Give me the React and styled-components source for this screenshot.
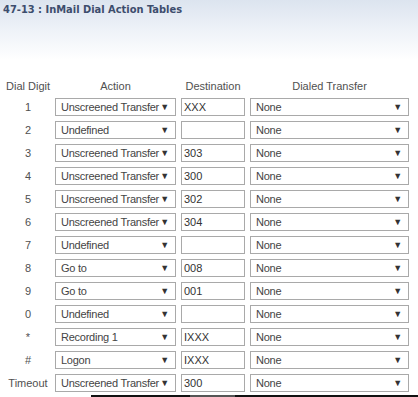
import React from 'react'
import styled, { createGlobalStyle } from 'styled-components';

const rows = [
    { digit: '1', action: 'Unscreened Transfer', dest: 'XXX' },
    { digit: '2', action: 'Undefined', dest: '' },
    { digit: '3', action: 'Unscreened Transfer', dest: '303' },
    { digit: '4', action: 'Unscreened Transfer', dest: '300' },
    { digit: '5', action: 'Unscreened Transfer', dest: '302' },
    { digit: '6', action: 'Unscreened Transfer', dest: '304' },
    { digit: '7', action: 'Undefined', dest: '' },
    { digit: '8', action: 'Go to', dest: '008' },
    { digit: '9', action: 'Go to', dest: '001' },
    { digit: '0', action: 'Undefined', dest: '' },
    { digit: '*', action: 'Recording 1', dest: 'IXXX' },
    { digit: '#', action: 'Logon', dest: 'IXXX' },
    { digit: 'Timeout', action: 'Unscreened Transfer', dest: '300' },
];

const Global = createGlobalStyle`
    html, body { margin: 0; padding: 0; background: #fff; }
    body { width: 418px; height: 397px; overflow: hidden; font-family: "Liberation Sans", Arial, sans-serif; }
`

const App = () => {
    return (
        <Page>
            <Global />
            <Header>
                <Title>47-13 : InMail Dial Action Tables</Title>
            </Header>
            <Table>
                <HeadCell>Dial Digit</HeadCell>
                <HeadCell>Action</HeadCell>
                <HeadCell>Destination</HeadCell>
                <HeadCell>Dialed Transfer</HeadCell>
                {rows.map(r => (
                    <React.Fragment key={r.digit}>
                        <Digit>{r.digit}</Digit>
                        <Select><span>{r.action}</span><Arrow>▼</Arrow></Select>
                        <Input>{r.dest}</Input>
                        <Select><span>None</span><Arrow>▼</Arrow></Select>
                    </React.Fragment>
                ))}
            </Table>
            <Footer>
                <FooterGray />
            </Footer>
        </Page>
    )
}

const Page = styled.div`
    width: 418px;
    height: 397px;
    display: flex;
    flex-direction: column;
    background: #fff;
`
const Header = styled.div`
    height: 75px;
    flex-shrink: 0;
    padding: 3px 0 0 3px;
    box-sizing: border-box;
    background: linear-gradient(to bottom, #dce4ef 0px, #eef2f8 30px, #ffffff 60px);
`
const Title = styled.div`
    font-family: "DejaVu Sans Condensed", "DejaVu Sans", sans-serif;
    font-weight: bold;
    font-size: 11px;
    color: #3d4d6d;
    line-height: 14px;
`
const Table = styled.div`
    display: grid;
    grid-template-columns: 44px 121px 64px 159px;
    grid-auto-rows: 18px;
    column-gap: 5px;
    row-gap: 5px;
    padding-left: 6px;
    font-family: "Liberation Sans", Arial, sans-serif;
    font-size: 11px;
    color: #4a4a4a;
`
const HeadCell = styled.div`
    text-align: center;
    line-height: 18px;
    margin-top: 2px;
    white-space: nowrap;
    color: #505050;
`
const Digit = styled.div`
    text-align: center;
    line-height: 18px;
    white-space: nowrap;
    color: #505050;
`
const Select = styled.div`
    display: flex;
    align-items: center;
    justify-content: space-between;
    box-sizing: border-box;
    border: 1px solid #a9a9a9;
    background: #fff;
    padding: 0 6px 0 5px;
    color: #444;
    letter-spacing: -0.25px;
    white-space: nowrap;
    overflow: hidden;
`
const Arrow = styled.span`
    font-size: 9px;
    color: #333;
`
const Input = styled.div`
    box-sizing: border-box;
    border: 1px solid #a9a9a9;
    background: #fff;
    padding: 0 2px;
    line-height: 16px;
    color: #333;
`
const Footer = styled.div`
    margin-top: auto;
    margin-left: 91px;
    height: 2px;
    flex-shrink: 0;
    background: #111;
    display: flex;
`
const FooterGray = styled.div`
    margin-left: 99px;
    width: 45px;
    background: #555;
`

export default App;
